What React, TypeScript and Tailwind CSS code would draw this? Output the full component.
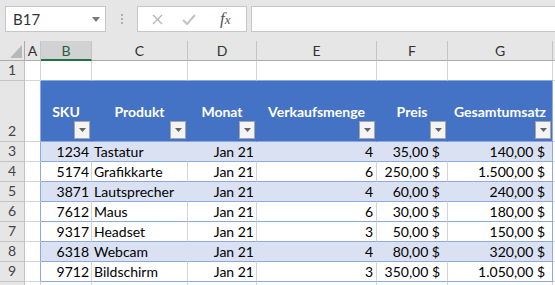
const rows = [
  { n: 3, sku: 1234, name: 'Tastatur', qty: 4, price: '35,00 $', total: '140,00 $', band: true },
  { n: 4, sku: 5174, name: 'Grafikkarte', qty: 6, price: '250,00 $', total: '1.500,00 $', band: false },
  { n: 5, sku: 3871, name: 'Lautsprecher', qty: 4, price: '60,00 $', total: '240,00 $', band: true },
  { n: 6, sku: 7612, name: 'Maus', qty: 6, price: '30,00 $', total: '180,00 $', band: false },
  { n: 7, sku: 9317, name: 'Headset', qty: 3, price: '50,00 $', total: '150,00 $', band: false },
  { n: 8, sku: 6318, name: 'Webcam', qty: 4, price: '80,00 $', total: '320,00 $', band: true },
  { n: 9, sku: 9712, name: 'Bildschirm', qty: 3, price: '350,00 $', total: '1.050,00 $', band: false },
];

const headers = [
  { label: 'SKU', w: 'w-[51px]' },
  { label: 'Produkt', w: 'w-[96px]' },
  { label: 'Monat', w: 'w-[69px]' },
  { label: 'Verkaufsmenge', w: 'w-[120px]' },
  { label: 'Preis', w: 'w-[71px]' },
  { label: 'Gesamtumsatz', w: 'w-[105px]' },
];

const FilterButton = () => (
  <div className="ml-auto mr-[1px] flex h-[18px] w-[16px] items-center justify-center border border-[#a6a6a6] bg-[#f4f4f4]">
    <svg width="7" height="4" viewBox="0 0 7 4">
      <path d="M0 0h7L3.5 4z" fill="#636363" />
    </svg>
  </div>
);

const RowHead = ({ n, h = 'h-[20px]' }: { n?: number; h?: string }) => (
  <div className={`${h} flex w-[25px] shrink-0 items-end justify-center border-r border-b border-[#c4c4c4] bg-[#e6e6e6] pb-[1px] text-[14px] leading-[18px] text-[#444]`}>
    {n}
  </div>
);

const App = () => {
  return (
    <div className="h-[285px] w-[555px] overflow-hidden bg-[#e6e6e6] font-[Lato,sans-serif] text-[14px] text-black">
      {/* formula bar */}
      <div className="flex h-[41px] items-start pt-[6px]">
        <div className="ml-[5px] flex h-[26px] w-[101px] items-center border border-[#c6c6c6] bg-white pl-[7px] pr-[5px] text-[15px] text-[#333]">
          <span>B17</span>
          <svg className="ml-auto" width="8" height="5" viewBox="0 0 8 5">
            <path d="M0 0h8L4 5z" fill="#7a7a7a" />
          </svg>
        </div>
        <div className="flex h-[26px] w-[31px] flex-col items-center justify-center gap-[2px]">
          <span className="h-[2px] w-[2px] bg-[#b0b0b0]" />
          <span className="h-[2px] w-[2px] bg-[#b0b0b0]" />
          <span className="h-[2px] w-[2px] bg-[#b0b0b0]" />
        </div>
        <div className="flex h-[26px] w-[110px] items-center border border-[#c6c6c6] bg-white">
          <svg className="ml-[14px]" width="11" height="11" viewBox="0 0 11 11">
            <path d="M1 1l9 9M10 1l-9 9" stroke="#b8b8b8" strokeWidth="1.4" />
          </svg>
          <svg className="ml-[19px]" width="14" height="11" viewBox="0 0 14 11">
            <path d="M1 6l4 4 8-9" stroke="#c2c2c2" strokeWidth="2" fill="none" />
          </svg>
          <span className="ml-[24px] font-['Liberation_Serif',serif] text-[17px] italic text-[#555]">
            f<span className="text-[13px]">x</span>
          </span>
        </div>
        <div className="ml-[4px] h-[26px] flex-1 border border-r-0 border-[#c6c6c6] bg-white" />
      </div>

      {/* column headers */}
      <div className="flex h-[20px]">
        <div className="relative w-[25px] shrink-0 border-r border-b border-[#ababab] bg-[#e6e6e6]">
          <svg className="absolute bottom-[2px] right-[2px]" width="12" height="13" viewBox="0 0 12 13">
            <path d="M12 0v13H0z" fill="#b8b8b8" />
          </svg>
        </div>
        <div className="flex w-[16px] shrink-0 items-center justify-center border-r border-b border-r-[#c4c4c4] border-b-[#ababab] text-[14px] text-[#333]">A</div>
        <div className="flex w-[51px] shrink-0 items-center justify-center border-r border-b-2 border-r-[#c4c4c4] border-b-[#217346] bg-[#d2d2d2] text-[14px] text-[#1e5e3c]">B</div>
        {[
          ['C', 'w-[96px]'],
          ['D', 'w-[69px]'],
          ['E', 'w-[120px]'],
          ['F', 'w-[71px]'],
          ['G', 'w-[105px]'],
        ].map(([l, w]) => (
          <div key={l} className={`${w} flex shrink-0 items-center justify-center border-r border-b border-r-[#c4c4c4] border-b-[#ababab] text-[14px] text-[#333]`}>
            {l}
          </div>
        ))}
        <div className="flex-1 border-b border-[#ababab]" />
      </div>

      {/* row 1 */}
      <div className="flex h-[20px] bg-white">
        <RowHead n={1} />
        <div className="w-[16px] shrink-0 border-r border-b border-[#d4d4d4]" />
        {headers.map((c) => (
          <div key={c.label} className={`${c.w} shrink-0 border-r border-b border-r-[#d4d4d4] border-b-[#8ea9db]`} />
        ))}
        <div className="flex-1 border-b border-[#d4d4d4]" />
      </div>

      {/* row 2: table header */}
      <div className="flex h-[61px] bg-white">
        <RowHead n={2} h="h-[61px]" />
        <div className="w-[16px] shrink-0 border-r border-b border-r-[#8ea9db] border-b-[#d4d4d4]" />
        {headers.map((c, i) => (
          <div
            key={c.label}
            className={`${c.w} flex shrink-0 flex-col justify-end border-b border-r border-b-[#8ea9db] bg-[#4472c4] pb-[2px] ${i === headers.length - 1 ? 'border-r-[#8ea9db]' : 'border-r-[#4472c4]'}`}
          >
            <div className="whitespace-nowrap text-center text-[14px] leading-[18px] font-bold text-white">{c.label}</div>
            <FilterButton />
          </div>
        ))}
        <div className="flex-1 border-b border-[#d4d4d4]" />
      </div>

      {/* data rows */}
      {rows.map((r) => {
        const bg = r.band ? 'bg-[#d9e1f2]' : 'bg-white';
        const vr = r.band ? 'border-r-[#d9e1f2]' : 'border-r-[#d4d4d4]';
        const cell = `shrink-0 flex items-center border-b border-r border-b-[#8ea9db] ${bg} whitespace-nowrap leading-[19px]`;
        return (
          <div key={r.n} className="flex h-[20px] bg-white">
            <RowHead n={r.n} />
            <div className="w-[16px] shrink-0 border-r border-b border-r-[#8ea9db] border-b-[#d4d4d4]" />
            <div className={`${cell} ${vr} w-[51px] justify-end pr-[2px]`}>{r.sku}</div>
            <div className={`${cell} ${vr} w-[96px] pl-[2px]`}>{r.name}</div>
            <div className={`${cell} ${vr} w-[69px] justify-end pr-[2px]`}>Jan 21</div>
            <div className={`${cell} ${vr} w-[120px] justify-end pr-[3px]`}>{r.qty}</div>
            <div className={`${cell} ${vr} w-[71px] justify-end pr-[7px]`}>{r.price}</div>
            <div className={`${cell} border-r-[#8ea9db] w-[105px] justify-end pr-[7px]`}>{r.total}</div>
            <div className="flex-1 border-b border-[#d4d4d4]" />
          </div>
        );
      })}

      {/* next row, cut off at the window edge */}
      <div className="flex h-[20px] bg-white">
        <RowHead />
        <div className="w-[16px] shrink-0 border-r border-[#d4d4d4]" />
        {headers.map((c) => (
          <div key={c.label} className={`${c.w} shrink-0 border-r border-[#d4d4d4]`} />
        ))}
      </div>
    </div>
  );
};

export default App;
